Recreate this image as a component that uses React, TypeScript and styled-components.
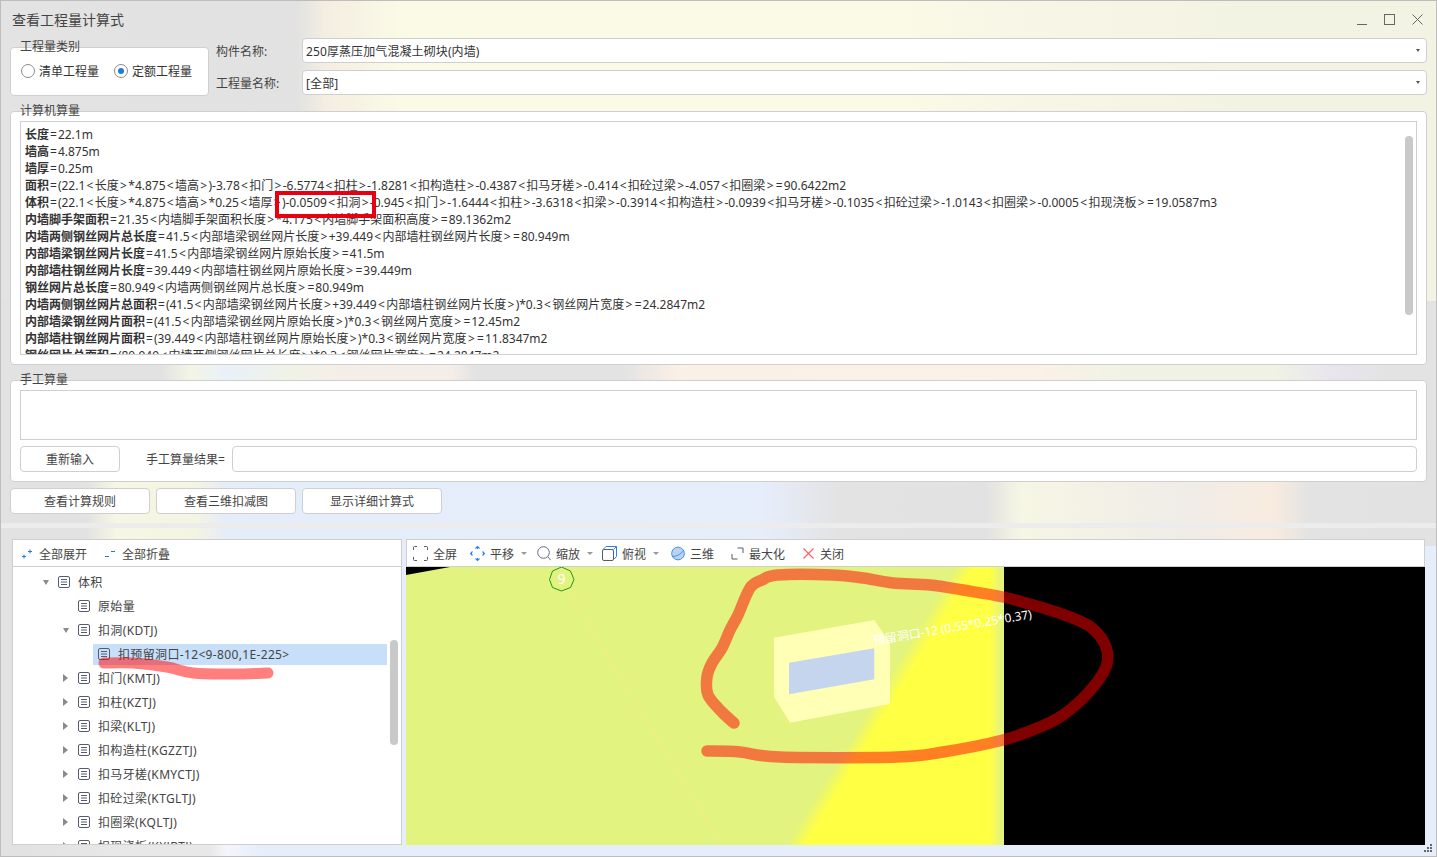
import React from 'react'
import styled, { createGlobalStyle } from 'styled-components'

const GlobalStyle = createGlobalStyle`
  html, body {
    margin: 0;
    overflow: hidden;
  }
  body {
    font-family: "Noto Sans", "Noto Sans CJK SC", sans-serif;
    font-size: 12px;
    color: #333;
  }
`

const Window = styled.div`
  background-color: #e3e3e3;
  background-image:
    linear-gradient(90deg, #e2e2e2 0, #e2e2e2 20px, #e8e8e8 120px, #e8e8e8 210px, #f5f6fb 225px, #e6edfb 260px, #e6edfb 1437px),
    linear-gradient(90deg, #e2e2e2 0, #e2e2e2 85px, #f6f6e4 115px, #f4f4e2 195px, #e5ecfa 225px, #e6edfb 760px, #e3e3e3 840px, #e2e2e2 985px, #f6f6e4 1020px, #f0ece8 1180px, #f8ecdf 1270px, #e3e3e3 1310px, #e2e2e2 1437px),
    linear-gradient(90deg, #e2e2e2 0, #e2e2e2 160px, #f4f5e6 190px, #e9f0f8 225px, #f0f2e6 290px, #f5eee8 340px, #f5eee8 450px, #e3e3e3 475px, #e3e3e3 620px, #fbf0e6 680px, #fbf1e6 1040px, #f0f3e4 1120px, #f0f3e4 1270px, #e8e5ee 1330px, #e3e3e3 1390px, #e3e3e3 1437px),
    linear-gradient(90deg, #e3e3e3 0, #e2e2e2 295px, #f4eee2 325px, #fbfae6 400px, #fafae6 900px, #f8f6e6 1000px, #f3f3e4 1240px, #f3f3e4 1437px);
  background-repeat: no-repeat;
  background-position: 0 545px, 0 440px, 0 300px, 0 0;
  background-size: 100% 315px, 100% 105px, 100% 140px, 100% 300px;
  border: 1px solid #bdbdbd;
  box-sizing: border-box;
  height: 857px;
  overflow: hidden;
  position: relative;
  width: 1437px;
`

const TitleBar = styled.div`
  align-items: center;
  box-sizing: border-box;
  display: flex;
  height: 37px;
  justify-content: space-between;
  padding: 0 13px 2px 11px;
`

const Title = styled.div`
  color: #444;
  font-size: 14px;
`

const WindowControls = styled.div`
  align-items: center;
  display: flex;
  gap: 17px;
  margin-top: 2px;
`

const Main = styled.div`
  padding: 0 9px;
`

const TopRow = styled.div`
  display: flex;
  gap: 7px;
`

const Group = styled.div<{ $height: number; $top: number }>`
  background: #fff;
  border: 1px solid #cfcfcf;
  border-radius: 4px;
  box-sizing: border-box;
  height: ${props => props.$height}px;
  margin-top: ${props => props.$top}px;
  padding: 9px;
  position: relative;
`

const TypeGroup = styled(Group)`
  align-items: center;
  display: flex;
  flex: 0 0 199px;
  padding: 0 0 2px 10px;
`

const GroupLabel = styled.span`
  color: #444;
  left: 9px;
  line-height: 16px;
  position: absolute;
  top: -9px;
`

const RadioItem = styled.label`
  align-items: center;
  display: flex;
  gap: 4px;
  margin-right: 15px;
`

const RadioMark = styled.span<{ $checked?: boolean }>`
  align-items: center;
  border: 1px solid #8c8c8c;
  border-radius: 50%;
  box-sizing: border-box;
  display: flex;
  height: 14px;
  justify-content: center;
  width: 14px;

  &::after {
    background: #1f7ae0;
    border-radius: 50%;
    content: '';
    display: ${props => (props.$checked ? 'block' : 'none')};
    height: 6px;
    width: 6px;
  }
`

const Fields = styled.div`
  display: flex;
  flex: 1;
  flex-direction: column;
  gap: 7px;
`

const FieldRow = styled.div`
  align-items: center;
  display: flex;
`

const FieldLabel = styled.span`
  color: #444;
  flex: 0 0 86px;
`

const SelectBox = styled.div`
  align-items: center;
  background: #fff;
  border: 1px solid #cfcfcf;
  border-radius: 4px;
  box-sizing: border-box;
  display: flex;
  flex: 1;
  height: 25px;
  justify-content: space-between;
  letter-spacing: 0.1px;
  padding: 0 6px 0 3px;
`

const SelectCaret = styled.span`
  border-left: 2px solid transparent;
  border-right: 2px solid transparent;
  border-top: 3px solid #555;
`

const OutputBox = styled.div`
  border: 1px solid #cfcfcf;
  box-sizing: border-box;
  height: 234px;
  overflow: hidden;
  padding: 4px 4px;
  position: relative;
`

const FormulaLine = styled.div`
  line-height: 17px;
  white-space: nowrap;

  b {
    font-weight: 700;
  }
`

const Symbol = styled.span<{ $pad: number }>`
  padding: 0 ${props => props.$pad}px;
`

const ScrollThumb = styled.div<{ $top: number; $left: number; $height: number }>`
  background: #c9c9c9;
  border-radius: 4px;
  height: ${props => props.$height}px;
  left: ${props => props.$left}px;
  position: absolute;
  top: ${props => props.$top}px;
  width: 8px;
`

const RedBox = styled.div`
  border: 4px solid #e60012;
  box-sizing: border-box;
  height: 27px;
  left: 254px;
  position: absolute;
  top: 69px;
  width: 101px;
`

const ManualArea = styled.div`
  border: 1px solid #cfcfcf;
  box-sizing: border-box;
  height: 50px;
`

const ManualRow = styled.div`
  align-items: center;
  display: flex;
  margin-top: 6px;
`

const Button = styled.button<{ $width: number }>`
  background: #fff;
  border: 1px solid #cfcfcf;
  border-radius: 4px;
  color: #444;
  flex: 0 0 ${props => props.$width}px;
  font-family: inherit;
  font-size: 12px;
  height: 26px;
  padding: 0;
`

const ManualLabel = styled.span`
  color: #444;
  margin: 0 7px 0 26px;
  white-space: nowrap;
`

const ResultInput = styled.div`
  background: #fff;
  border: 1px solid #cfcfcf;
  border-radius: 4px;
  box-sizing: border-box;
  flex: 1;
  height: 26px;
`

const ActionRow = styled.div`
  display: flex;
  gap: 6px;
  margin-top: 6px;
`

const Splitter = styled.div`
  background: #ececec;
  height: 5px;
  margin-top: 9px;
`

const Bottom = styled.div`
  display: flex;
  gap: 4px;
  margin-top: 11px;
  padding-left: 11px;
`

const Panel = styled.div<{ $width: number }>`
  display: flex;
  flex: 0 0 ${props => props.$width}px;
  flex-direction: column;
  height: 306px;
`

const Toolbar = styled.div<{ $pad: number }>`
  align-items: center;
  background: #fff;
  border: 1px solid #cfcfcf;
  box-sizing: border-box;
  display: flex;
  flex: 0 0 28px;
  padding: 1px 0 0 ${props => props.$pad}px;
`

const ToolItem = styled.div<{ $space?: number; $gap?: number }>`
  align-items: center;
  color: #444;
  display: flex;
  gap: ${props => props.$gap ?? 5}px;
  margin-right: ${props => props.$space ?? 13}px;
  white-space: nowrap;
`

const ToolCaret = styled.span`
  border-left: 3px solid transparent;
  border-right: 3px solid transparent;
  border-top: 3px solid #999;
  margin-left: 2px;
`

const Tree = styled.div`
  background: #fff;
  border: 1px solid #cfcfcf;
  border-top: 0;
  box-sizing: border-box;
  flex: 1;
  overflow: hidden;
  padding-top: 3px;
  position: relative;
`

const TreeRow = styled.div<{ $depth: number }>`
  align-items: center;
  color: #444;
  display: flex;
  height: 24px;
  padding-left: ${props => 28 + props.$depth * 20}px;
  white-space: nowrap;
`

const ArrowSlot = styled.span`
  align-items: center;
  display: flex;
  flex: 0 0 17px;
`

const Arrow = styled.span<{ $open: boolean }>`
  border-style: solid;
  border-color: transparent;
  ${props =>
    props.$open
      ? 'border-width: 5px 3.5px 0; border-top-color: #8a8a8a; margin-left: 2px;'
      : 'border-width: 4px 0 4px 5px; border-left-color: #8a8a8a; margin-left: 2px;'}
`

const TreeLabel = styled.span<{ $selected?: boolean }>`
  align-items: center;
  background: ${props => (props.$selected ? '#c7dff9' : 'transparent')};
  display: flex;
  gap: 8px;
  height: 21px;
  letter-spacing: 0.35px;
  margin-left: ${props => (props.$selected ? '-5px' : '0')};
  padding-left: ${props => (props.$selected ? '5px' : '0')};
  width: ${props => (props.$selected ? '289px' : 'auto')};
`

const MarkerLayer = styled.svg`
  left: -1px;
  pointer-events: none;
  position: absolute;
  top: 0;
`

const SceneFrame = styled.div`
  background: #000;
  flex: 1;
  overflow: hidden;
`

const Scene = styled.svg`
  display: block;
`

const Grip = styled.svg`
  bottom: 3px;
  position: absolute;
  right: 3px;
`

const formulas: [string, string][] = [
  ['长度', '=22.1m'],
  ['墙高', '=4.875m'],
  ['墙厚', '=0.25m'],
  ['面积', '=(22.1<长度>*4.875<墙高>)-3.78<扣门>-6.5774<扣柱>-1.8281<扣构造柱>-0.4387<扣马牙槎>-0.414<扣砼过梁>-4.057<扣圈梁>=90.6422m2'],
  ['体积', '=(22.1<长度>*4.875<墙高>*0.25<墙厚>)-0.0509<扣洞>-0.945<扣门>-1.6444<扣柱>-3.6318<扣梁>-0.3914<扣构造柱>-0.0939<扣马牙槎>-0.1035<扣砼过梁>-1.0143<扣圈梁>-0.0005<扣现浇板>=19.0587m3'],
  ['内墙脚手架面积', '=21.35<内墙脚手架面积长度>*4.175<内墙脚手架面积高度>=89.1362m2'],
  ['内墙两侧钢丝网片总长度', '=41.5<内部墙梁钢丝网片长度>+39.449<内部墙柱钢丝网片长度>=80.949m'],
  ['内部墙梁钢丝网片长度', '=41.5<内部墙梁钢丝网片原始长度>=41.5m'],
  ['内部墙柱钢丝网片长度', '=39.449<内部墙柱钢丝网片原始长度>=39.449m'],
  ['钢丝网片总长度', '=80.949<内墙两侧钢丝网片总长度>=80.949m'],
  ['内墙两侧钢丝网片总面积', '=(41.5<内部墙梁钢丝网片长度>+39.449<内部墙柱钢丝网片长度>)*0.3<钢丝网片宽度>=24.2847m2'],
  ['内部墙梁钢丝网片面积', '=(41.5<内部墙梁钢丝网片原始长度>)*0.3<钢丝网片宽度>=12.45m2'],
  ['内部墙柱钢丝网片面积', '=(39.449<内部墙柱钢丝网片原始长度>)*0.3<钢丝网片宽度>=11.8347m2'],
  ['钢丝网片总面积', '=(80.949<内墙两侧钢丝网片总长度>)*0.3<钢丝网片宽度>=24.2847m2'],
]

type TreeNode = { label: string; depth: number; arrow?: 'open' | 'closed'; selected?: boolean }

const treeNodes: TreeNode[] = [
  { label: '体积', depth: 0, arrow: 'open' },
  { label: '原始量', depth: 1 },
  { label: '扣洞(KDTJ)', depth: 1, arrow: 'open' },
  { label: '扣预留洞口-12<9-800,1E-225>', depth: 2, selected: true },
  { label: '扣门(KMTJ)', depth: 1, arrow: 'closed' },
  { label: '扣柱(KZTJ)', depth: 1, arrow: 'closed' },
  { label: '扣梁(KLTJ)', depth: 1, arrow: 'closed' },
  { label: '扣构造柱(KGZZTJ)', depth: 1, arrow: 'closed' },
  { label: '扣马牙槎(KMYCTJ)', depth: 1, arrow: 'closed' },
  { label: '扣砼过梁(KTGLTJ)', depth: 1, arrow: 'closed' },
  { label: '扣圈梁(KQLTJ)', depth: 1, arrow: 'closed' },
  { label: '扣现浇板(KXJBTJ)', depth: 1, arrow: 'closed' },
]

type Point = [number, number]

const scenePoints: Point[] = [
  [734, 723], [722, 712], [708, 695], [707, 677], [712, 663], [722, 648], [730, 630], [738, 615],
  [750, 588], [762, 580], [778, 575], [833, 575], [863, 578], [893, 583], [930, 585], [963, 590],
  [1003, 597], [1040, 607], [1070, 617], [1092, 628], [1106, 647], [1106, 667], [1088, 693],
  [1063, 715], [1040, 727], [1003, 740], [943, 752], [897, 757], [780, 757], [740, 752], [707, 751],
]

const treePoints: Point[] = [[104, 663], [133, 663], [167, 667], [193, 673], [235, 674], [268, 673]]

// catmull-rom through the points, the pen strokes have no corners
const smoothPath = (points: Point[]) => {
  let d = `M${points[0][0]} ${points[0][1]}`
  for (let i = 0; i < points.length - 1; i++) {
    const p0 = points[Math.max(i - 1, 0)]
    const p1 = points[i]
    const p2 = points[i + 1]
    const p3 = points[Math.min(i + 2, points.length - 1)]
    const c1x = p1[0] + (p2[0] - p0[0]) / 6
    const c1y = p1[1] + (p2[1] - p0[1]) / 6
    const c2x = p2[0] - (p3[0] - p1[0]) / 6
    const c2y = p2[1] - (p3[1] - p1[1]) / 6
    d += `C${c1x} ${c1y} ${c2x} ${c2y} ${p2[0]} ${p2[1]}`
  }
  return d
}

const formulaParts = (value: string) =>
  value.split(/([<>=])/).map((part, index) => {
    if (part === '<' || part === '>') return <Symbol key={index} $pad={1.3}>{part}</Symbol>
    if (part === '=') return <Symbol key={index} $pad={1}>{part}</Symbol>
    return part
  })

const DocIcon = () => (
  <svg width="12" height="12" viewBox="0 0 12 12" fill="none" stroke="#565b70">
    <rect x="0.5" y="0.5" width="11" height="11" rx="1.5" />
    <path d="M3 3.5h6M3 6h6M3 8.5h6" />
  </svg>
)

const ExpandIcon = () => (
  <svg width="10" height="10" viewBox="0 0 10 10" fill="none" stroke="#1f7ae0">
    <path d="M6 2.5h4M8 .5v4M0 7.5h4M2 5.5v4" />
  </svg>
)

const CollapseIcon = () => (
  <svg width="10" height="10" viewBox="0 0 10 10" fill="none" stroke="#1f7ae0">
    <path d="M6 2.5h4M0 7.5h4" />
  </svg>
)

const FullIcon = () => (
  <svg width="15" height="15" viewBox="0 0 15 15" fill="none" stroke="#555a6a">
    <path d="M.5 4V1.5a1 1 0 0 1 1-1H4M11 .5h2.5a1 1 0 0 1 1 1V4M14.5 11v2.5a1 1 0 0 1-1 1H11M4 14.5H1.500a1 1 0 0 1-1-1V11" />
  </svg>
)

const PanIcon = () => (
  <svg width="15" height="15" viewBox="0 0 15 15" fill="none" stroke="#2f80e4" strokeWidth="1.1">
    <path d="M5.500 2.500l2-2 2 2M5.500 12.500l2 2 2-2M2.500 5.500l-2 2 2 2M12.500 5.500l2 2-2 2" />
    <path d="M7.500 1v2M7.500 12v2M1 7.500h1M13 7.500h1" />
  </svg>
)

const ZoomIcon = () => (
  <svg width="14" height="15" viewBox="0 0 14 15" fill="none" stroke="#666b78">
    <circle cx="6.500" cy="6.500" r="5.800" />
    <path d="M10.800 10.800l3 3.500" />
  </svg>
)

const CubeIcon = () => (
  <svg width="15" height="15" viewBox="0 0 15 15" fill="none" stroke="#565b70">
    <rect x="0.5" y="3.500" width="11" height="11" rx="1.500" />
    <path d="M1 3.500L4 .5h10.500v10l-3 3" stroke="#2f80e4" />
    <path d="M11.500 3.500L14.500 .5" stroke="#2f80e4" />
  </svg>
)

const SphereIcon = () => (
  <svg width="14" height="15" viewBox="0 0 15 15">
    <circle cx="7.500" cy="7.500" r="6.800" fill="#b9d3f5" stroke="#3f88e0" />
    <path d="M1.500 10.500C5 11 11 8.500 13.500 4" fill="none" stroke="#3f88e0" />
  </svg>
)

const MaximizeIcon = () => (
  <svg width="13" height="13" viewBox="0 0 13 13" fill="none" stroke="#555a6a">
    <path d="M6.500 1H12v5M1 7v5h5.500" />
  </svg>
)

const CloseIcon = () => (
  <svg width="13" height="13" viewBox="0 0 13 13" fill="none" stroke="#f4646a" strokeWidth="1.200">
    <path d="M1.500 1.500l10 10M11.500 1.500l-10 10" />
  </svg>
)

const App: React.FC = () => (
  <Window>
    <GlobalStyle />
    <TitleBar>
      <Title>查看工程量计算式</Title>
      <WindowControls>
        <svg width="10" height="11" viewBox="0 0 10 11" stroke="#666">
          <path d="M0 10.500h10" />
        </svg>
        <svg width="11" height="11" viewBox="0 0 11 11" fill="none" stroke="#666">
          <rect x="0.5" y="0.5" width="10" height="10" />
        </svg>
        <svg width="11" height="11" viewBox="0 0 11 11" fill="none" stroke="#666">
          <path d="M.5 .5l10 10M10.500 .5l-10 10" />
        </svg>
      </WindowControls>
    </TitleBar>

    <Main>
      <TopRow>
        <TypeGroup $height={49} $top={9}>
          <GroupLabel>工程量类别</GroupLabel>
          <RadioItem>
            <RadioMark />
            清单工程量
          </RadioItem>
          <RadioItem>
            <RadioMark $checked />
            定额工程量
          </RadioItem>
        </TypeGroup>
        <Fields>
          <FieldRow>
            <FieldLabel>构件名称:</FieldLabel>
            <SelectBox>
              250厚蒸压加气混凝土砌块(内墙)
              <SelectCaret />
            </SelectBox>
          </FieldRow>
          <FieldRow>
            <FieldLabel>工程量名称:</FieldLabel>
            <SelectBox>
              [全部]
              <SelectCaret />
            </SelectBox>
          </FieldRow>
        </Fields>
      </TopRow>

      <Group $height={254} $top={15}>
        <GroupLabel>计算机算量</GroupLabel>
        <OutputBox>
          {formulas.map(([name, value]) => (
            <FormulaLine key={name}>
              <b>{name}</b>
              {formulaParts(value)}
            </FormulaLine>
          ))}
          <ScrollThumb $left={1384} $top={14} $height={179} />
          <RedBox />
        </OutputBox>
      </Group>

      <Group $height={102} $top={15}>
        <GroupLabel>手工算量</GroupLabel>
        <ManualArea />
        <ManualRow>
          <Button $width={100}>重新输入</Button>
          <ManualLabel>手工算量结果=</ManualLabel>
          <ResultInput />
        </ManualRow>
      </Group>

      <ActionRow>
        <Button $width={140}>查看计算规则</Button>
        <Button $width={140}>查看三维扣减图</Button>
        <Button $width={140}>显示详细计算式</Button>
      </ActionRow>
    </Main>

    <Splitter />

    <Bottom>
      <Panel $width={390}>
        <Toolbar $pad={9}>
          <ToolItem $space={18} $gap={7}>
            <ExpandIcon />
            全部展开
          </ToolItem>
          <ToolItem $gap={7}>
            <CollapseIcon />
            全部折叠
          </ToolItem>
        </Toolbar>
        <Tree>
          {treeNodes.map(node => (
            <TreeRow key={node.label} $depth={node.depth}>
              <ArrowSlot>{node.arrow && <Arrow $open={node.arrow === 'open'} />}</ArrowSlot>
              <TreeLabel $selected={node.selected}>
                <DocIcon />
                {node.label}
              </TreeLabel>
            </TreeRow>
          ))}
          <ScrollThumb $left={377} $top={73} $height={105} />
          <MarkerLayer width="390" height="278" viewBox="12 567 390 278">
            <path
              d={smoothPath(treePoints)}
              fill="none"
              stroke="rgba(255,0,0,0.5)"
              strokeWidth="11"
              strokeLinecap="round"
              strokeLinejoin="round"
            />
          </MarkerLayer>
        </Tree>
      </Panel>

      <Panel $width={1019}>
        <Toolbar $pad={6}>
          <ToolItem>
            <FullIcon />
            全屏
          </ToolItem>
          <ToolItem $space={10}>
            <PanIcon />
            平移
            <ToolCaret />
          </ToolItem>
          <ToolItem $space={9}>
            <ZoomIcon />
            缩放
            <ToolCaret />
          </ToolItem>
          <ToolItem $space={12}>
            <CubeIcon />
            俯视
            <ToolCaret />
          </ToolItem>
          <ToolItem $space={17}>
            <SphereIcon />
            三维
          </ToolItem>
          <ToolItem $space={17}>
            <MaximizeIcon />
            最大化
          </ToolItem>
          <ToolItem>
            <CloseIcon />
            关闭
          </ToolItem>
        </Toolbar>
        <SceneFrame>
          <Scene width="1019" height="278" viewBox="406 567 1019 278">
            <defs>
              <linearGradient id="yellowFade" gradientUnits="userSpaceOnUse" x1="893" y1="669.300" x2="906.800" y2="677.700">
                <stop offset="0" stopColor="#ffff44" stopOpacity="0" />
                <stop offset="1" stopColor="#ffff44" />
              </linearGradient>
              <linearGradient id="edgeFade" gradientUnits="userSpaceOnUse" x1="990" y1="0" x2="1002" y2="0">
                <stop offset="0" stopColor="#e2f37f" stopOpacity="0" />
                <stop offset="1" stopColor="#e2f37f" />
              </linearGradient>
            </defs>
            <rect x="406" y="567" width="598" height="278" fill="#e2f37f" />
            <rect x="406" y="567" width="598" height="278" fill="url(#yellowFade)" />
            <rect x="990" y="567" width="14" height="278" fill="url(#edgeFade)" />
            <polygon points="406,567 450,567 406,575" fill="#000" />
            <line x1="567" y1="590" x2="722" y2="845" stroke="#f6e98c" strokeWidth="1" />
            <polygon
              points="561.500,567 570.500,571 574,579.500 570.500,587.500 561.500,591 552.500,587.500 549.500,579.500 552.500,571"
              fill="none"
              stroke="#1f9a14"
            />
            <text x="561.500" y="584" fill="#fff" fontSize="14" textAnchor="middle" fontFamily="Noto Sans">
              9
            </text>
            <polygon points="774,637.700 874.300,620 890,643 890,704 790,722.700 774,696.700" fill="#ffffb6" />
            <polygon points="789,662.700 874.300,648.300 874.300,679.300 789,694.300" fill="#c5d5ee" />
            <text
              transform="translate(874 645) rotate(-9.600)"
              fill="#fff"
              fontSize="12"
              fontFamily="Noto Sans, Noto Sans CJK SC, sans-serif"
            >
              预留洞口-12 (0.55*0.25*0.37)
            </text>
            <path
              d={smoothPath(scenePoints)}
              fill="none"
              stroke="rgba(255,0,0,0.5)"
              strokeWidth="11.500"
              strokeLinecap="round"
              strokeLinejoin="round"
            />
          </Scene>
        </SceneFrame>
      </Panel>
    </Bottom>

    <Grip width="9" height="9" viewBox="0 0 9 9" fill="#666">
      <rect x="6" y="0" width="2" height="2" />
      <rect x="3" y="3" width="2" height="2" />
      <rect x="6" y="3" width="2" height="2" />
      <rect x="0" y="6" width="2" height="2" />
      <rect x="3" y="6" width="2" height="2" />
      <rect x="6" y="6" width="2" height="2" />
    </Grip>
  </Window>
)

export default App
